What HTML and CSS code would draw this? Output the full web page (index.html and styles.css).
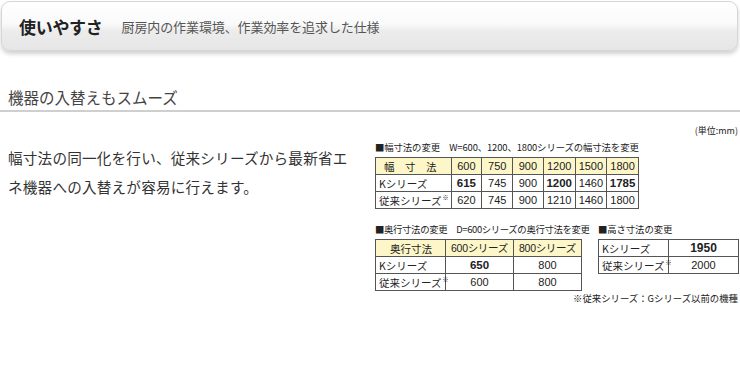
FILE: index.html
```html
<!DOCTYPE html>
<html lang="ja">
<head>
<meta charset="utf-8">
<link rel="stylesheet" href="styles.css">
</head>
<body>
<div class="page">
  <div class="banner">
    <span class="banner-title">使いやすさ</span>
    <span class="banner-sub">厨房内の作業環境、作業効率を追求した仕様</span>
  </div>
  <h2 class="section-head">機器の入替えもスムーズ</h2>
  <div class="content">
    <p class="lead">幅寸法の同一化を行い、従来シリーズから最新省エネ機器への入替えが容易に行えます。</p>
    <div class="spec">
      <div class="unit">(単位:mm)</div>
      <div class="cap">■幅寸法の変更　W=600、1200、1800シリーズの幅寸法を変更</div>
      <table class="tbl t-width">
        <tr class="hd"><td class="lbl spaced">幅　寸　法</td><td>600</td><td>750</td><td>900</td><td>1200</td><td>1500</td><td>1800</td></tr>
        <tr><td class="lbl">Kシリーズ</td><td class="b">615</td><td>745</td><td>900</td><td class="b">1200</td><td>1460</td><td class="b">1785</td></tr>
        <tr><td class="lbl">従来シリーズ<sup>※</sup></td><td>620</td><td>745</td><td>900</td><td>1210</td><td>1460</td><td>1800</td></tr>
      </table>
      <div class="row2">
        <div class="blk blk-depth">
          <div class="cap">■奥行寸法の変更　D=600シリーズの奥行寸法を変更</div>
          <table class="tbl t-depth">
            <tr class="hd"><td class="lbl center">奥行寸法</td><td class="jp">600シリーズ</td><td class="jp">800シリーズ</td></tr>
            <tr><td class="lbl">Kシリーズ</td><td class="b">650</td><td>800</td></tr>
            <tr><td class="lbl">従来シリーズ<sup>※</sup></td><td>600</td><td>800</td></tr>
          </table>
        </div>
        <div class="blk blk-height">
          <div class="cap">■高さ寸法の変更</div>
          <table class="tbl t-height">
            <tr><td class="lbl">Kシリーズ</td><td class="b">1950</td></tr>
            <tr><td class="lbl">従来シリーズ<sup>※</sup></td><td>2000</td></tr>
          </table>
        </div>
      </div>
      <div class="note">※従来シリーズ：Gシリーズ以前の機種</div>
    </div>
  </div>
</div>
</body>
</html>
```
FILE: styles.css
```css
* { box-sizing: border-box; }
html, body { margin: 0; padding: 0; background: #fff; }
body { font-family: "Noto Sans CJK JP", "Liberation Sans", sans-serif; color: #333; }
.page { width: 740px; height: 382px; overflow: hidden; }

.banner {
  margin: 1px 2px 0 1px;
  height: 50px;
  border: 1px solid #d6d6d6;
  border-radius: 9px;
  background: linear-gradient(#ffffff 0%, #fafafa 45%, #ececec 60%, #e6e6e6 100%);
  box-shadow: 0 3px 4px rgba(0,0,0,0.18);
  display: flex;
  align-items: center;
  padding-left: 17px;
}
.banner-title { font-size: 17px; font-weight: 700; color: #222; letter-spacing: -0.3px; }
.banner-sub { margin-left: 19px; font-size: 13px; color: #555; letter-spacing: -0.1px; }

.section-head {
  margin: 35px 0 0 0;
  padding: 0 0 2px 8px;
  font-size: 15.5px;
  font-weight: 400;
  line-height: 22px;
  color: #444;
  border-bottom: 2px solid #cfcfcf;
}

.content { display: flex; }
.lead {
  flex: 0 0 375px;
  width: 375px;
  margin: 31px 0 0 0;
  padding: 0 17px 0 8px;
  font-size: 14.6px;
  letter-spacing: 0.2px;
  line-height: 29px;
  color: #333;
}
.spec { width: 365px; padding-top: 13px; }
.unit { text-align: right; font-size: 9px; line-height: 12px; color: #222; padding-right: 2px; }
.cap { font-size: 9.4px; line-height: 12px; color: #222; margin-top: 4px; margin-bottom: 4px; white-space: nowrap; letter-spacing: -0.1px; }
.blk-depth .cap { letter-spacing: -0.35px; }

.tbl { border-collapse: collapse; font-size: 11px; color: #222; }
.tbl td {
  border: 1px solid #555;
  height: 17px;
  padding: 0 2px;
  text-align: center;
  font-family: "Liberation Sans", "Noto Sans CJK JP", sans-serif;
  line-height: 15px;
  white-space: nowrap;
}
.tbl td.lbl { text-align: left; font-family: "Noto Sans CJK JP", sans-serif; font-size: 10.5px; padding-left: 3px; }
.tbl td.jp { font-size: 10.5px; letter-spacing: -0.3px; }
.tbl td.center { text-align: center; }
.tbl td.spaced { padding-left: 8px; }
.tbl td.b { font-weight: 700; font-size: 11.5px; }
.tbl .hd td { background: #fdf6c9; }
.tbl sup { font-size: 6px; line-height: 0; vertical-align: 5px; margin-left: 1px; }

.t-width { width: 264px; }
.t-width td.lbl { width: 72px; }
.t-width td { width: 32px; }

.row2 { display: flex; margin-top: 10px; }
.blk { flex: none; }
.blk-depth { width: 206px; margin-right: 17px; }
.blk-height { width: 140px; }
.t-depth { width: 206px; table-layout: fixed; }
.t-depth td.lbl { width: 70px; }
.t-depth td { width: 68px; }
.t-height { width: 140px; table-layout: fixed; }
.t-height td.lbl { width: 70px; }
.t-height td { width: 70px; }
.t-height td.b { font-size: 12px; }

.note { text-align: right; font-size: 9.4px; line-height: 12px; margin-top: 1px; color: #222; padding-right: 2px; }
```
